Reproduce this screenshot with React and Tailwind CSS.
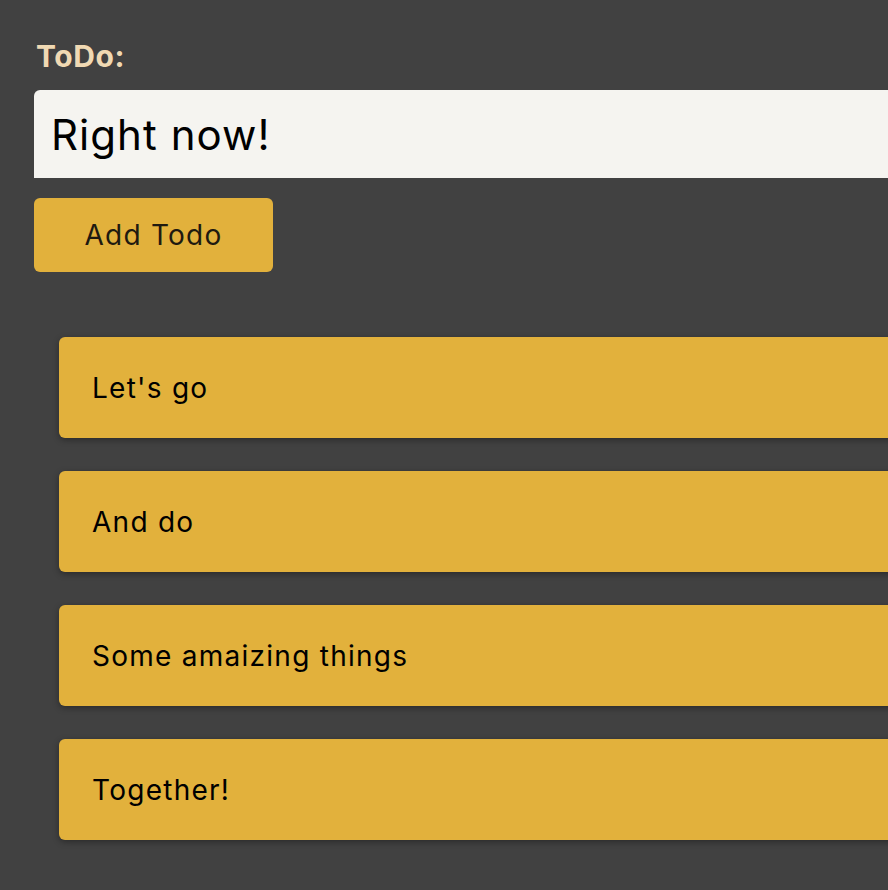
import React from "react";

const todos = ["Let's go", "And do", "Some amaizing things", "Together!"];

const TodoItem = ({ text }) => (
  <div className="flex h-[101px] w-[900px] items-center rounded-l-[6px] bg-[#e2b13c] pl-[33px] text-[28px] tracking-[0.045em] text-black shadow-[0_2px_6px_rgba(0,0,0,0.35)]">
    {text}
  </div>
);

export default function App() {
  return (
    <div
      className="h-[890px] w-[888px] overflow-hidden bg-[#414141] pl-[34px] pt-[38px]"
      style={{ fontFamily: "Inter, 'Noto Sans', sans-serif" }}
    >
      <label className="block pl-[2px] text-[30px] font-bold leading-[36px] tracking-[0.02em] text-[#f0d9b3]">ToDo:</label>
      <div className="mt-[16px] flex h-[88px] w-[900px] items-center rounded-tl-[6px] bg-[#f5f4f0] pl-[17px] text-[42px] tracking-[0.025em] text-black">
        Right now!
      </div>
      <button className="mt-[20px] h-[74px] w-[239px] rounded-[6px] bg-[#e2b13c] text-[28px] tracking-[0.045em] text-[#1f1a10]">
        Add Todo
      </button>
      <div className="mt-[65px] flex flex-col gap-[33px] pl-[25px]">
        {todos.map((t) => (
          <TodoItem key={t} text={t} />
        ))}
      </div>
    </div>
  );
}
